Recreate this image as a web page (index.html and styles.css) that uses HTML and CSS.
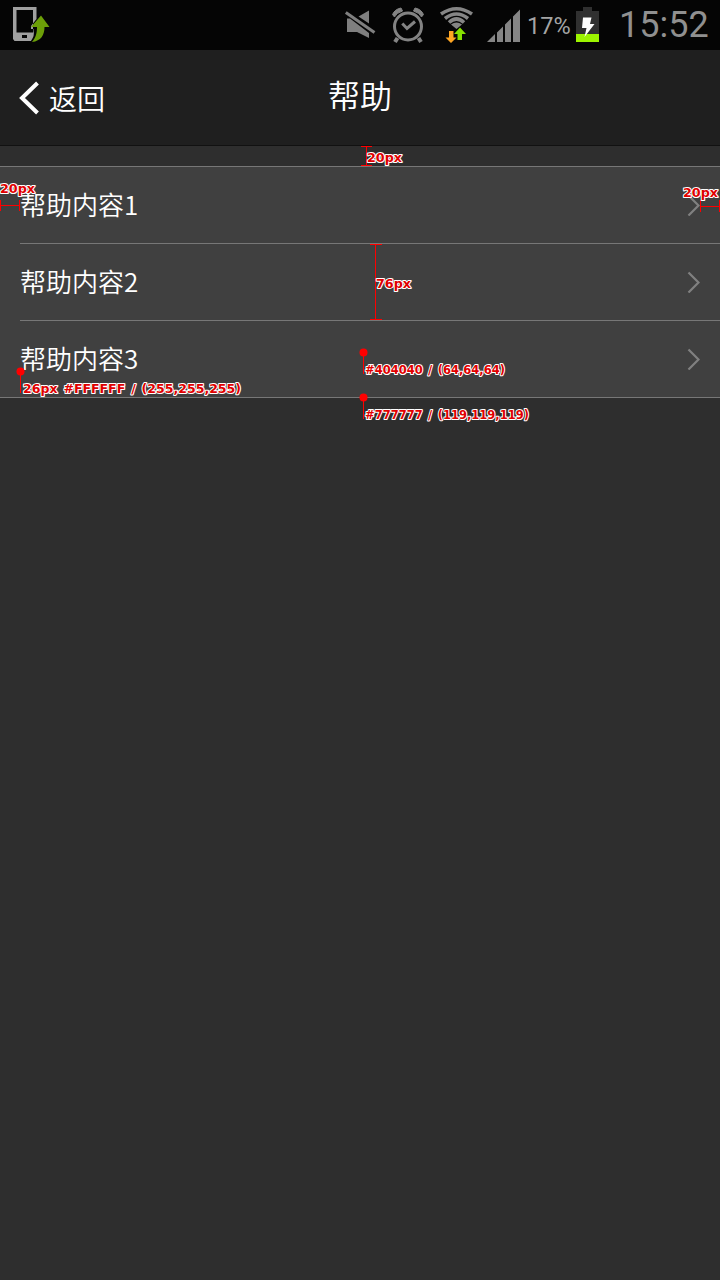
FILE: index.html
```html
<!DOCTYPE html>
<html lang="zh-CN">
<head>
<meta charset="utf-8">
<title>帮助</title>
<link rel="stylesheet" href="styles.css">
</head>
<body>
<div class="screen">
  <div class="status">
    <svg class="sync" width="38" height="38" viewBox="12 5 38 38">
      <path fill="#a0a0a0" fill-rule="evenodd" d="M13 7H36.500V19L31 26V29H33.500V31Q35 35 31 41H14.500L13 39ZM16.500 10V32.500H33V10ZM22 35V38H27V35Z"/>
      <path fill="#6c9f08" d="M41 15.500L49.500 27H44.500C44.500 35 41 41 32 42C36 37 37 33 37 27H31Z"/>
    </svg>
    <svg class="mute" width="32" height="32" viewBox="344 9 32 32" fill="#7f7f7f">
      <path d="M358.500 16.500L369 10.500V23.500ZM347 18.500H350L369 33V38L357 32H347Z"/>
      <path d="M345.800 12.500L374.500 32.500" stroke="#7f7f7f" stroke-width="3"/>
    </svg>
    <svg class="alarm" width="34" height="38" viewBox="391 6 34 38" fill="none" stroke="#838383">
      <circle cx="408" cy="26.500" r="13.500" stroke-width="3"/>
      <path d="M402.300 23.500L407 28.500L415 21.500" stroke-width="3"/>
      <path d="M397.500 38L395 42M418.500 38L421 42" stroke-width="4"/>
      <path d="M392.500 14.500Q395 9 401 8L402.500 11Q396 13 394.500 17ZM423.500 14.500Q421 9 415 8L413.500 11Q420 13 421.500 17Z" fill="#838383" stroke-width="1"/>
    </svg>
    <svg class="wifi" width="34" height="38" viewBox="439 6 34 38">
      <g fill="none" stroke="#858585" stroke-width="3.600">
        <path d="M441 14Q456.500 3.500 472 14"/>
        <path d="M445 18.500Q456.500 9.500 468 18.500"/>
        <path d="M449 22.500Q456.500 15.500 464 22.500"/>
      </g>
      <path fill="#858585" d="M451 24.500Q456.500 20.500 462 24.500L456.500 29Z"/>
      <path fill="#ffa522" d="M449 31H453.500V37.500H456.500L451 43L445.500 37.500H449Z"/>
      <path fill="#86e000" d="M460 27.500L466 34H462V40H457.500V34H454Z"/>
    </svg>
    <svg class="signal" width="33" height="33" viewBox="487 9 33 33" fill="#858585">
      <path d="M487 42L495 34V42ZM497 42V32.500L503 26.500V42ZM505 42V24.500L511 18.500V42ZM513 42V16.500L520 9.500V42Z"/>
    </svg>
    <span class="percent">17%</span>
    <svg class="battery" width="23" height="35" viewBox="576 7 23 35">
      <path fill="#303030" d="M576 11H583V7H592V11H599V34H576Z"/>
      <path fill="#9cf400" d="M576 34H599V42H576Z"/>
      <path fill="#fff" d="M583 17.500H591.500L590 24H594.500L584.500 37L586.500 28H582Z"/>
    </svg>
    <span class="clock">15:52</span>
  </div>
  <header class="header">
    <div class="back">
      <svg width="20" height="34" viewBox="0 0 20 34"><path d="M18.500 2L3 17L18.500 32" fill="none" stroke="#fff" stroke-width="4"/></svg>
      <span>返回</span>
    </div>
    <h1 class="title">帮助</h1>
  </header>
  <ul class="list">
    <li class="item"><div class="row"><span class="name">帮助内容1</span><svg class="chevron" width="13" height="22" viewBox="0 0 13 22"><path d="M1.500 1.500L11.500 11.500L1.500 21.500"/></svg></div></li>
    <li class="item"><div class="row"><span class="name">帮助内容2</span><svg class="chevron" width="13" height="22" viewBox="0 0 13 22"><path d="M1.500 1.500L11.500 11.500L1.500 21.500"/></svg></div></li>
    <li class="item"><div class="row"><span class="name">帮助内容3</span><svg class="chevron" width="13" height="22" viewBox="0 0 13 22"><path d="M1.500 1.500L11.500 11.500L1.500 21.500"/></svg></div></li>
  </ul>
  <svg class="notes" width="720" height="1280" viewBox="0 0 720 1280">
    <g class="rules">
      <rect x="361" y="146" width="11" height="1"/><rect x="366" y="146" width="1" height="20"/><rect x="361" y="165" width="11" height="1"/>
      <rect x="370" y="244" width="12" height="1"/><rect x="375" y="244" width="1" height="76"/><rect x="370" y="319" width="12" height="1"/>
      <rect x="0" y="200" width="1" height="11"/><rect x="0" y="205" width="20" height="1"/><rect x="19" y="200" width="1" height="11"/>
      <rect x="700" y="200" width="1" height="12"/><rect x="700" y="206" width="20" height="1"/><rect x="719" y="200" width="1" height="12"/>
      <rect x="20" y="372" width="1" height="21"/><rect x="363" y="353" width="1" height="21"/><rect x="363" y="398" width="1" height="21"/>
    </g>
    <g class="dots"><circle cx="20.500" cy="371.500" r="4"/><circle cx="363.500" cy="352.500" r="4"/><circle cx="363.500" cy="397.500" r="4"/></g>
    <g class="labels">
      <text x="367" y="162" textLength="35" lengthAdjust="spacingAndGlyphs">20px</text>
      <text x="0" y="193" textLength="35" lengthAdjust="spacingAndGlyphs">20px</text>
      <text x="683" y="197" textLength="35" lengthAdjust="spacingAndGlyphs">20px</text>
      <text x="376" y="288" textLength="35" lengthAdjust="spacingAndGlyphs">76px</text>
      <text x="365" y="374" textLength="140" lengthAdjust="spacingAndGlyphs">#404040 / (64,64,64)</text>
      <text x="23" y="393" textLength="218" lengthAdjust="spacingAndGlyphs">26px #FFFFFF / (255,255,255)</text>
      <text x="365" y="419" textLength="164" lengthAdjust="spacingAndGlyphs">#777777 / (119,119,119)</text>
    </g>
  </svg>
</div>
</body>
</html>
```
FILE: styles.css
```css
* { box-sizing: border-box; }
body { margin: 0; background: #2e2e2e; }
svg { display: block; flex: none; }
.screen {
  position: relative;
  width: 720px;
  height: 1280px;
  overflow: hidden;
  background: #2e2e2e;
  color: #fff;
  font-family: "Noto Sans CJK SC", sans-serif;
  font-weight: 350;
}
.status {
  display: flex;
  align-items: flex-start;
  height: 50px;
  padding-left: 12px;
  background: #050505;
  font-family: Roboto, sans-serif;
  font-weight: 400;
}
.sync { margin: 5px 294px 0 0; }
.mute { margin: 9px 15px 0 0; }
.alarm { margin: 6px 14px 0 0; }
.wifi { margin: 6px 14px 0 0; }
.signal { margin: 9px 7px 0 0; }
.percent { width: 49px; margin-top: 11px; color: #a4a4a4; font-size: 23.500px; line-height: 30px; }
.battery { margin: 7px 20px 0 0; }
.clock { margin-top: 5px; color: #909090; font-size: 36px; line-height: 40px; white-space: nowrap; }
.header {
  display: grid;
  grid-template-columns: 1fr auto 1fr;
  align-items: center;
  height: 96px;
  padding-left: 19px;
  padding-right: 19px;
  background: #1f1f1f;
  border-bottom: 1px solid #111;
}
.back { display: flex; align-items: center; gap: 10px; font-size: 28px; line-height: 40px; }
.title { margin: 0; padding-bottom: 7px; font-size: 32px; line-height: 44px; font-weight: 350; }
.list { margin: 20px 0 0; padding: 0; list-style: none; background: #404040; border-top: 1px solid #777; border-bottom: 1px solid #777; }
.item { padding-left: 20px; }
.row { display: flex; align-items: center; justify-content: space-between; height: 76px; padding-right: 20px; font-size: 26px; line-height: 38px; }
.name { padding-bottom: 2px; }
.item + .item .row { height: 77px; border-top: 1px solid #777; }
.chevron { fill: none; stroke: #808080; stroke-width: 2.2; }
.notes { position: absolute; left: 0; top: 0; }
.rules { fill: #f00; shape-rendering: crispEdges; }
.dots { fill: #f00; }
.labels {
  fill: #e00000;
  stroke: #fff;
  stroke-width: 2px;
  stroke-linejoin: round;
  paint-order: stroke;
  font-family: "DejaVu Sans", sans-serif;
  font-size: 12px;
  font-weight: 700;
  word-spacing: 1.500px;
}
```
